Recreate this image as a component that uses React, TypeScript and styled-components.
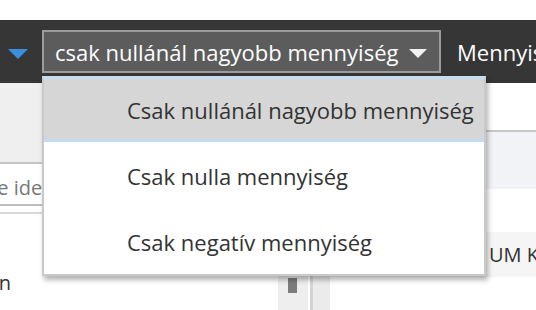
import React, { useState } from "react";
import styled, { createGlobalStyle } from "styled-components";

const GlobalStyle = createGlobalStyle`
  html, body {
    margin: 0;
    padding: 0;
    background: #fff;
    overflow: hidden;
  }
  body {
    font-family: "Open Sans", "Noto Sans", sans-serif;
    width: 536px;
    height: 310px;
  }
`;

const Page = styled.div`
  position: relative;
  width: 536px;
  height: 310px;
  padding-top: 20px;
  box-sizing: border-box;
  display: flex;
  flex-direction: column;
  overflow: hidden;
`;

const Toolbar = styled.div`
  height: 63px;
  background: #363636;
  display: flex;
  align-items: center;
  padding-left: 8px;
  flex-shrink: 0;
`;

const BlueCaret = styled.span`
  width: 0;
  height: 0;
  border-left: 10px solid transparent;
  border-right: 10px solid transparent;
  border-top: 10px solid #3b8de0;
  margin-top: 4px;
  margin-right: 14px;
  flex-shrink: 0;
`;

const SelectBox = styled.div`
  width: 399px;
  height: 43px;
  box-sizing: border-box;
  border: 2px solid #9c9c9c;
  background: #5c5c5c;
  color: #fff;
  font-size: 22px;
  display: flex;
  align-items: center;
  justify-content: space-between;
  padding: 0 12px 0 11px;
  flex-shrink: 0;
  white-space: nowrap;
`;

const WhiteCaret = styled.span`
  width: 0;
  height: 0;
  border-left: 9px solid transparent;
  border-right: 9px solid transparent;
  border-top: 9px solid #f2f2f2;
  margin-top: 3px;
`;

const ToolbarLabel = styled.span`
  color: #fff;
  font-size: 22px;
  margin-left: 16px;
  white-space: nowrap;
`;

const Body = styled.div`
  flex: 1;
  display: flex;
  min-height: 0;
`;

const Sidebar = styled.div`
  width: 310px;
  display: flex;
  flex-direction: column;
  flex-shrink: 0;
  overflow: hidden;
`;

const SidebarHead = styled.div`
  height: 79px;
  background: #efefef;
  border-bottom: 2px solid #c4c4c4;
`;

const SearchInput = styled.div`
  height: 42px;
  border-bottom: 2px solid #bdbdbd;
  display: flex;
  align-items: center;
  padding-top: 6px;
  box-sizing: border-box;
  color: #777;
  font-size: 20px;
  white-space: nowrap;
  margin-left: -50px;
`;

const SidebarList = styled.div`
  flex: 1;
  margin-top: 6px;
  border-top: 2px solid #d8d8d8;
  display: flex;
`;

const ListItems = styled.div`
  flex: 1;
  display: flex;
  flex-direction: column;
  padding-top: 55px;
`;

const ListItem = styled.div`
  width: 11px;
  display: flex;
  justify-content: flex-end;
  font-size: 20px;
  color: #333;
  white-space: nowrap;
`;

const ScrollTrack = styled.div`
  width: 30px;
  margin-right: 2px;
  background: #eeeeee;
`;

const ScrollThumb = styled.div`
  width: 9px;
  height: 15px;
  background: #7b7b7b;
  margin: 64px 0 0 10px;
`;

const Main = styled.div`
  flex: 1;
  border-left: 3px solid #d4d4d4;
  display: flex;
  flex-direction: column;
`;

const MainTop = styled.div`
  height: 47px;
  border-bottom: 2px solid #c8c8c8;
`;

const Grid = styled.div`
  flex: 1;
  display: flex;
`;

const Gutter = styled.div`
  width: 17px;
  background: #ebebeb;
  flex-shrink: 0;
`;

const GridBody = styled.div`
  flex: 1;
  display: flex;
  flex-direction: column;
`;

const TableHead = styled.div`
  height: 57px;
  background: #f1f3f6;
`;

const Spacer = styled.div`
  height: 43px;
`;

const TableRow = styled.div`
  height: 45px;
  background: #f5f5f5;
  display: flex;
  align-items: center;
  padding-left: 159px;
  font-size: 20px;
  color: #333;
  white-space: nowrap;
  overflow: hidden;
`;

const Menu = styled.ul`
  position: absolute;
  left: 42px;
  top: 76px;
  width: 444px;
  margin: 0;
  padding: 0;
  list-style: none;
  box-sizing: border-box;
  background: #fff;
  border: 2px solid #c9c9c9;
  border-top: 3px solid #c5dcf4;
  box-shadow: 2px 4px 5px rgba(0, 0, 0, 0.3);
`;

const MenuItem = styled.li<{ $active?: boolean }>`
  height: ${(p) => (p.$active ? "63px" : "66px")};
  box-sizing: border-box;
  display: flex;
  align-items: center;
  padding: 2px 0 0 83px;
  font-size: 22px;
  color: #333;
  white-space: nowrap;
  background: ${(p) => (p.$active ? "#d6d6d6" : "#fff")};
  border-bottom: ${(p) => (p.$active ? "3px solid #c5dcf4" : "none")};
  cursor: pointer;
`;

const options = [
  "Csak nullánál nagyobb mennyiség",
  "Csak nulla mennyiség",
  "Csak negatív mennyiség",
];

export default function App() {
  const [selected, setSelected] = useState(0);

  return (
    <>
      <GlobalStyle />
      <Page>
        <Toolbar>
          <BlueCaret />
          <SelectBox>
            <span>csak nullánál nagyobb mennyiség</span>
            <WhiteCaret />
          </SelectBox>
          <ToolbarLabel>Mennyiség</ToolbarLabel>
        </Toolbar>
        <Body>
          <Sidebar>
            <SidebarHead />
            <SearchInput>Írja be ide a keresett szót</SearchInput>
            <SidebarList>
              <ListItems>
                <ListItem>Raktáron</ListItem>
              </ListItems>
              <ScrollTrack>
                <ScrollThumb />
              </ScrollTrack>
            </SidebarList>
          </Sidebar>
          <Main>
            <MainTop />
            <Grid>
              <Gutter />
              <GridBody>
                <TableHead />
                <Spacer />
                <TableRow>UM Kód</TableRow>
              </GridBody>
            </Grid>
          </Main>
        </Body>
        <Menu>
          {options.map((o, i) => (
            <MenuItem key={o} $active={i === selected} onClick={() => setSelected(i)}>
              {o}
            </MenuItem>
          ))}
        </Menu>
      </Page>
    </>
  );
}
